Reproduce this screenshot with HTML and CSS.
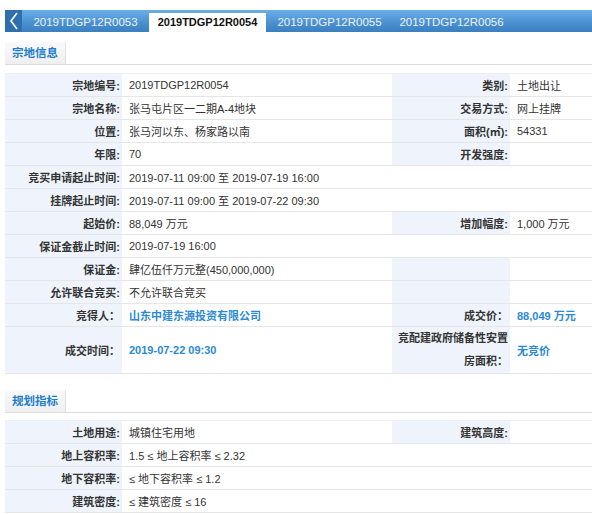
FILE: index.html
```html
<!DOCTYPE html>
<html lang="zh-CN">
<head>
<meta charset="utf-8">
<link rel="stylesheet" href="styles.css">
</head>
<body>
<div class="page">
  <div class="tabbar">
    <div class="back"><svg width="10" height="18" viewBox="0 0 10 18"><path d="M8 1 L2 9 L8 17" fill="none" stroke="#fff" stroke-width="1.6"/></svg></div>
    <div class="tab">2019TDGP12R0053</div>
    <div class="tab active">2019TDGP12R0054</div>
    <div class="tab">2019TDGP12R0055</div>
    <div class="tab">2019TDGP12R0056</div>
  </div>

  <div class="section-head"><span class="section-btn">宗地信息</span></div>
  <table class="info">
    <colgroup><col class="c1"><col class="c2"><col class="c3"><col class="c4"></colgroup>
    <tr><th>宗地编号:</th><td>2019TDGP12R0054</td><th>类别:</th><td>土地出让</td></tr>
    <tr><th>宗地名称:</th><td>张马屯片区一二期A-4地块</td><th>交易方式:</th><td>网上挂牌</td></tr>
    <tr><th>位置:</th><td>张马河以东、杨家路以南</td><th>面积(㎡):</th><td>54331</td></tr>
    <tr><th>年限:</th><td>70</td><th>开发强度:</th><td></td></tr>
    <tr><th>竞买申请起止时间:</th><td colspan="3">2019-07-11 09:00 至 2019-07-19 16:00</td></tr>
    <tr><th>挂牌起止时间:</th><td colspan="3">2019-07-11 09:00 至 2019-07-22 09:30</td></tr>
    <tr><th>起始价:</th><td>88,049 万元</td><th>增加幅度:</th><td>1,000 万元</td></tr>
    <tr><th>保证金截止时间:</th><td colspan="3">2019-07-19 16:00</td></tr>
    <tr><th>保证金:</th><td>肆亿伍仟万元整(450,000,000)</td><th></th><td></td></tr>
    <tr><th>允许联合竞买:</th><td>不允许联合竞买</td><th></th><td></td></tr>
    <tr><th>竞得人：</th><td class="hl">山东中建东源投资有限公司</td><th>成交价：</th><td class="hl">88,049 万元</td></tr>
    <tr class="tall"><th>成交时间：</th><td class="hl">2019-07-22 09:30</td><th class="wrap">竞配建政府储备性安置房面积：</th><td class="hl">无竞价</td></tr>
  </table>

  <div class="section-head second"><span class="section-btn">规划指标</span></div>
  <table class="info compact">
    <colgroup><col class="c1"><col class="c2"><col class="c3"><col class="c4"></colgroup>
    <tr><th>土地用途:</th><td>城镇住宅用地</td><th>建筑高度:</th><td></td></tr>
    <tr><th>地上容积率:</th><td colspan="3">1.5 ≤ 地上容积率 ≤ 2.32</td></tr>
    <tr><th>地下容积率:</th><td colspan="3">≤ 地下容积率 ≤ 1.2</td></tr>
    <tr><th>建筑密度:</th><td colspan="3">≤ 建筑密度 ≤ 16</td></tr>
  </table>
</div>
</body>
</html>
```

FILE: styles.css
```css
html, body {
  margin: 0;
  padding: 0;
  background: #fff;
}
body {
  font-family: "Liberation Sans", "Noto Sans CJK SC", Arial, sans-serif;
  font-size: 11px;
  color: #333;
}
.page {
  padding: 10px 0 0 5px;
  overflow: hidden;
}
.tabbar {
  display: flex;
  align-items: flex-end;
  height: 22px;
  background: linear-gradient(#6aaee8, #4a90cf 60%, #3a7fbf);
  white-space: nowrap;
}
.back {
  width: 17px;
  height: 22px;
  background: #2f6fae;
  display: flex;
  align-items: center;
  justify-content: center;
  flex: none;
}
.tab {
  flex: none;
  width: 117px;
  height: 19px;
  line-height: 19px;
  margin-left: 5px;
  text-align: center;
  color: #eaf2fb;
  font-size: 11.5px;
}
.tab:first-of-type { margin-left: 7px; }
.tab.active {
  background: #fff;
  color: #111;
  font-weight: bold;
  font-size: 11px;
}
.section-head {
  margin-top: 10px;
  border-bottom: 1px solid #ddd;
  height: 22px;
}
.section-head.second { margin-top: 16px; }
.section-btn {
  display: inline-block;
  height: 22px;
  line-height: 22px;
  padding: 0 7px;
  background: linear-gradient(#fafafa, #efefef);
  border-right: 1px solid #e2e2e2;
  color: #1e7dcb;
  font-weight: bold;
  font-size: 11.5px;
}
table.info {
  margin-top: 8px;
  width: 100%;
  border-collapse: collapse;
  table-layout: fixed;
}
table.info.compact { margin-top: 7px; }
col.c1 { width: 117px; }
col.c2 { width: 270px; }
col.c3 { width: 118px; }
col.c4 { width: auto; }
table.info th, table.info td {
  height: 22px;
  border-top: 1px solid #e6e6e6;
  padding: 0;
  white-space: nowrap;
  overflow: hidden;
}
table.info tr:first-child th, table.info tr:first-child td { border-top: 1px solid #eceff3; }
table.info tr:last-child th, table.info tr:last-child td { border-bottom: 1px solid #e6e6e6; }
table.info th {
  background: #eef3fc;
  text-align: right;
  font-weight: bold;
  color: #333;
  padding-right: 2px;
}
table.info td {
  text-align: left;
  padding-left: 7px;
  font-weight: normal;
}
table.info td.hl {
  color: #2b8ad3;
  font-weight: bold;
}
tr.tall th, tr.tall td { height: 46px; }
table.info th.wrap {
  white-space: normal;
  line-height: 23px;
  word-break: break-all;
  padding-left: 4px;
}
```
